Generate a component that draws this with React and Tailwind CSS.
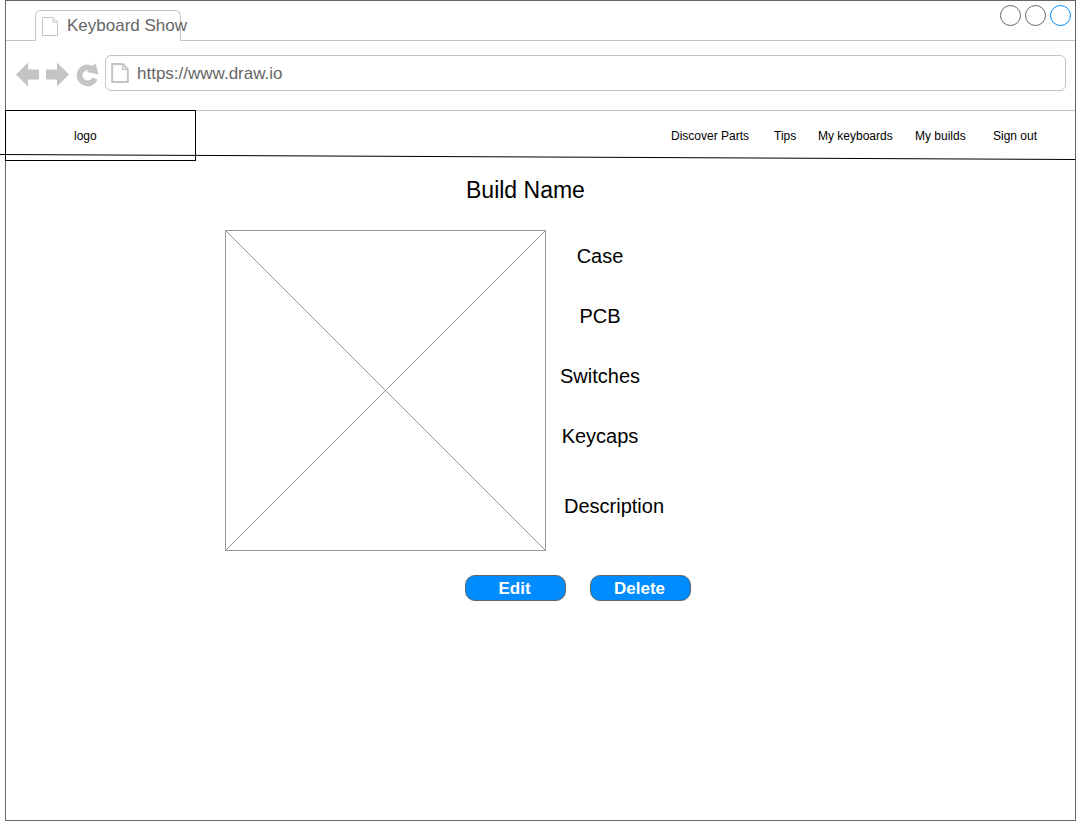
const links = [
  { label: "Discover Parts", width: "w-[78px]" },
  { label: "Tips", width: "w-[22px] ml-[25px]" },
  { label: "My keyboards", width: "w-[75px] ml-[22px]" },
  { label: "My builds", width: "w-[51px] ml-[22px]" },
  { label: "Sign out", width: "w-[45px] ml-[27px]" },
];

const parts = [
  { label: "Case", place: "h-[60px]" },
  { label: "PCB", place: "h-[60px]" },
  { label: "Switches", place: "h-[60px]" },
  { label: "Keycaps", place: "h-[70px]" },
];

function BrowserBar() {
  return (
    <header>
      <div className="flex h-10 text-[17px] text-[#666666]">
        <div className="w-[29px] border-b border-[#c4c4c4]" />
        <div className="mt-[9px] flex h-[31px] w-[146px] items-start rounded-t-[6px] border border-b-0 border-[#c4c4c4] pl-[6px] whitespace-nowrap">
          <svg className="mt-[6px] h-[19px] w-4 shrink-0" viewBox="0 0 16 19" fill="none" stroke="#c4c4c4">
            <path d="M.5 .5H11L15.5 5V18.5H.5ZM11 .5V5H15.5" />
          </svg>
          <span className="mt-[5px] ml-[9px] leading-[20px]">Keyboard Show</span>
        </div>
        <div className="flex flex-1 justify-end gap-1 border-b border-[#c4c4c4] pt-1 pr-1">
          <span className="size-[21px] rounded-full border border-[#666666]" />
          <span className="size-[21px] rounded-full border border-[#666666]" />
          <span className="size-[21px] rounded-full border border-[#008cff]" />
        </div>
      </div>
      <div className="flex h-[70px] border-b border-[#c4c4c4] pt-[14px] pl-[10px]">
        <svg className="mt-[6px] h-[26px] w-[86px]" viewBox="0 0 86 26" fill="#c4c4c4">
          <path d="M0 13.5 12 1.5V8.5H23V18.5H12V25.5ZM53 13.5 41 1.5V8.5H30V18.5H41V25.5Z" />
          <path d="M78.9 17.6A8 8 0 1 1 76.8 8.2" fill="none" stroke="#c4c4c4" strokeWidth="5.8" />
          <path d="M79.4 2.3 82.7 13.5 70.8 11Z" />
        </svg>
        <div className="ml-[3px] flex h-9 w-[961px] items-start rounded-[6px] border border-[#c4c4c4] pl-[5px]">
          <svg className="mt-[7px] h-5 w-[18px]" viewBox="0 0 18 20" fill="none" stroke="#c4c4c4">
            <path d="M1.2 1H11.5L16.8 6.3V19H1.2Z" strokeWidth="2" />
            <path d="M11.5 1V6.3H16.8" strokeWidth="1.3" />
          </svg>
          <span className="mt-[8px] ml-2 text-[17px] leading-[20px] text-[#666666]">https://www.draw.io</span>
        </div>
      </div>
    </header>
  );
}

export default function App() {
  return (
    <div className="relative h-[821px] w-[1076px] overflow-hidden bg-white pl-[5px] font-['Liberation_Sans',Arial,sans-serif] text-black">
      <div className="h-[821px] w-[1071px] border border-[#666666]">
        <BrowserBar />
        <nav className="-mt-px -ml-px flex h-[51px] text-[12px]">
          <div className="flex w-[191px] items-center border border-black pl-[68px]">logo</div>
          <div className="flex items-center pl-[475px] whitespace-nowrap">
            {links.map(({ label, width }) => (
              <a key={label} className={width}>{label}</a>
            ))}
          </div>
        </nav>
        <main>
          <h1 className="mt-4 pl-[460px] text-[23px] leading-[26px]">Build Name</h1>
          <section className="mt-[27px] flex pl-[219px]">
            <svg className="size-[321px]" viewBox="0 0 321 321" fill="none" stroke="#999999">
              <path d="M.5 .5H320.5V320.5H.5ZM.5 .5 320.5 320.5M320.5 .5 .5 320.5" />
            </svg>
            <div className="pt-[14px] text-[20px] leading-6">
              <div className="w-[108px] text-center">
                {parts.map(({ label, place }) => (
                  <div key={label} className={place}>{label}</div>
                ))}
              </div>
              <div className="pl-[18px]">Description</div>
            </div>
          </section>
          <div className="mt-6 flex gap-6 pl-[459px] text-[17px] leading-[24px] font-bold text-white">
            <button className="h-[26px] w-[101px] rounded-[10px] border border-[#666666] bg-[#008cff] pt-px pr-[2px]">Edit</button>
            <button className="h-[26px] w-[101px] rounded-[10px] border border-[#666666] bg-[#008cff] pt-px pr-[2px]">Delete</button>
          </div>
        </main>
      </div>
      <svg className="absolute top-[150px] left-0 h-[14px] w-[1076px]" viewBox="0 0 1076 14" stroke="#000000">
        <path d="M0 4.5 1075 9.5" />
      </svg>
    </div>
  );
}
